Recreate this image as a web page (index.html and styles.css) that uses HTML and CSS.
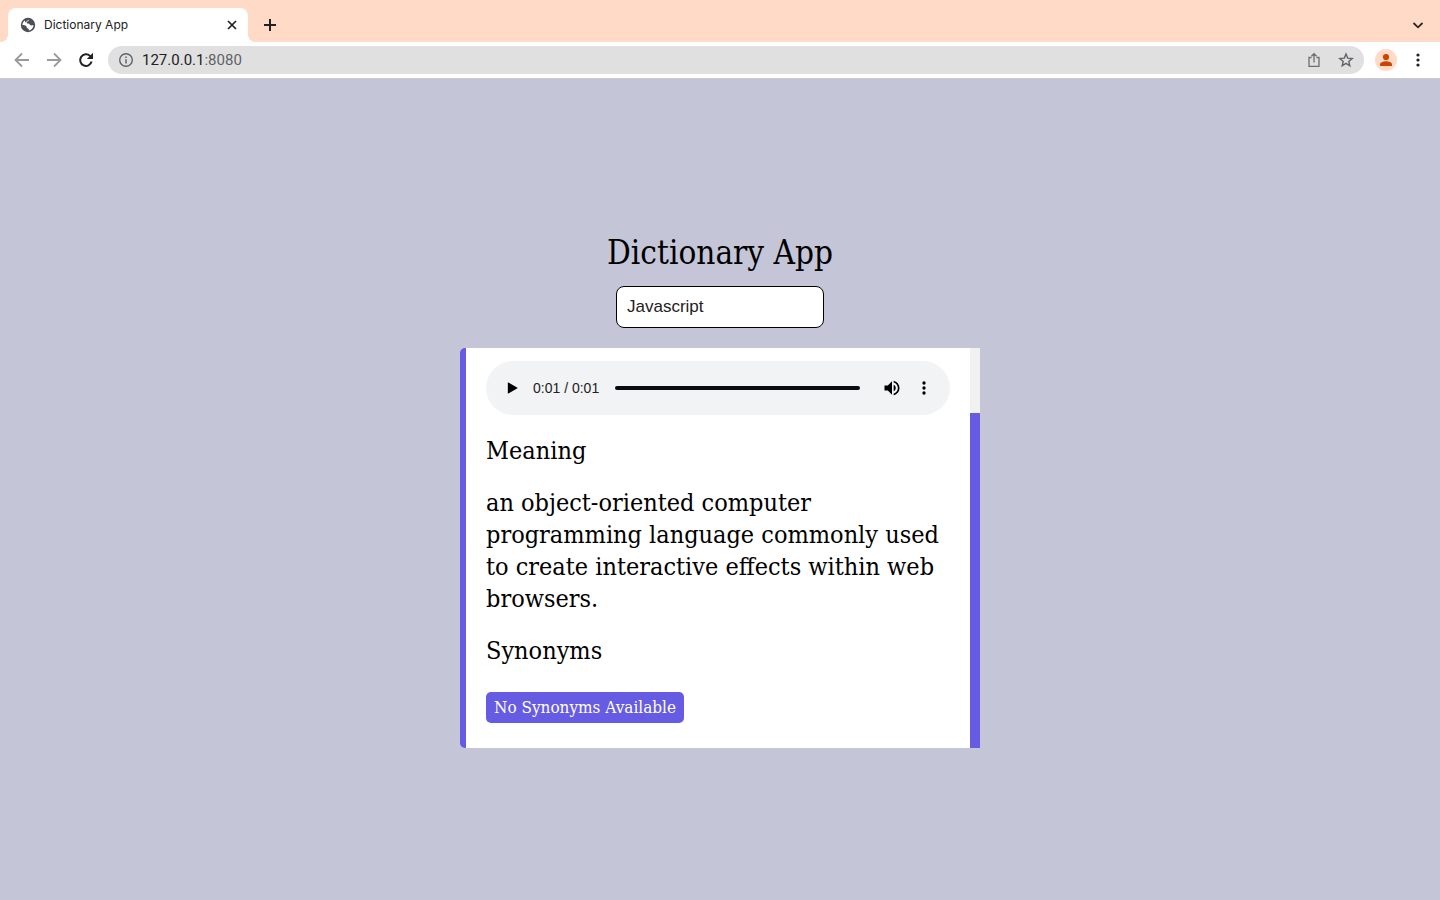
FILE: index.html
```html
<!DOCTYPE html>
<html lang="en">
<head>
<meta charset="utf-8">
<meta name="viewport" content="width=device-width, initial-scale=1">
<title>Dictionary App</title>
<link rel="stylesheet" href="styles.css">
</head>
<body>
<header class="browser">
  <div class="tab-strip">
    <div class="tab">
      <svg class="favicon" viewBox="0 0 16 16" width="16" height="16" aria-hidden="true">
        <circle cx="8" cy="8" r="7.200" fill="#4b4f57"/>
        <path d="M8.800 2.600C9.300 3.900 7.900 4.300 7 4.900C6.200 5.600 6.700 6.500 8 6.500C9.800 6.500 9.600 7.900 10.400 8.300C11.300 8.700 12.400 8.200 13.600 8.300C13.300 11 11.300 13.200 8.600 13.600C9.200 12.500 8.900 11.600 7.800 11.400C6.400 11.100 7 9.800 6.100 8.900C5.200 8.100 3.600 8.300 2.400 7.900C2.500 6.200 3.400 4.600 4.800 3.600C5.200 4.500 5.100 5.400 6 5.500C6.300 4 7.400 4.300 8.800 2.600Z" fill="#fff"/>
      </svg>
      <span class="tab-title">Dictionary App</span>
      <button class="icon-button" aria-label="Close tab"><svg viewBox="0 0 16 16" width="16" height="16"><path d="M4 4l8 8M12 4l-8 8" stroke="#202124" stroke-width="1.700"/></svg></button>
    </div>
    <button class="icon-button new-tab" aria-label="New tab"><svg viewBox="0 0 16 16" width="16" height="16"><path d="M8 2v12M2 8h12" stroke="#202124" stroke-width="2"/></svg></button>
    <button class="icon-button tab-search" aria-label="Search tabs"><svg viewBox="0 0 16 16" width="16" height="16"><path d="M3.500 6L8 10.300L12.500 6" fill="none" stroke="#2d2523" stroke-width="1.800"/></svg></button>
  </div>
  <nav class="toolbar" aria-label="Browser">
    <button class="icon-button" aria-label="Back"><svg viewBox="0 0 16 16" width="16" height="16"><path d="M15 8H2M8 1.500L1.500 8L8 14.500" fill="none" stroke="#9a9a9a" stroke-width="1.800"/></svg></button>
    <button class="icon-button" aria-label="Forward"><svg viewBox="0 0 16 16" width="16" height="16"><path d="M1 8H14M8 1.500L14.500 8L8 14.500" fill="none" stroke="#9a9a9a" stroke-width="1.800"/></svg></button>
    <button class="icon-button" aria-label="Reload"><svg viewBox="0 0 16 16" width="16" height="16"><path d="M13.600 9.500A5.800 5.800 0 1 1 12 3.900L13.200 5.200" fill="none" stroke="#202124" stroke-width="2"/><path d="M15 .8V7H8.800Z" fill="#202124"/></svg></button>
    <div class="address">
      <svg viewBox="0 0 16 16" width="16" height="16" aria-hidden="true"><circle cx="8" cy="8" r="6.300" fill="none" stroke="#5f6368" stroke-width="1.400"/><path d="M8 7.200v4.300M8 4.500v1.600" stroke="#5f6368" stroke-width="1.500"/></svg>
      <span class="url">127.0.0.1<span class="port">:8080</span></span>
      <button class="icon-button share" aria-label="Share"><svg viewBox="0 0 16 16" width="16" height="16"><path d="M5.500 5.500H3V14.300H13V5.500H10.500M8 10.500V2M5.400 4.300L8 1.700L10.600 4.300" fill="none" stroke="#6b6e73" stroke-width="1.300"/></svg></button>
      <button class="icon-button" aria-label="Bookmark"><svg viewBox="0 0 16 16" width="16" height="16"><path d="M8 2L9.700 6.100L14.200 6.500L10.800 9.400L11.800 13.800L8 11.400L4.200 13.800L5.200 9.400L1.800 6.500L6.300 6.100Z" fill="none" stroke="#5f6368" stroke-width="1.400"/></svg></button>
    </div>
    <button class="icon-button avatar" aria-label="Profile"><svg viewBox="0 0 22 22" width="22" height="22"><circle cx="11" cy="8" r="3.100" fill="#cc4300"/><path d="M5 17V15.500C5 13.300 8.500 12.300 11 12.300S17 13.300 17 15.500V17Z" fill="#cc4300"/></svg></button>
    <button class="icon-button" aria-label="Browser menu"><svg viewBox="0 0 16 16" width="16" height="16" fill="#202124"><circle cx="8" cy="3" r="1.600"/><circle cx="8" cy="8" r="1.600"/><circle cx="8" cy="13" r="1.600"/></svg></button>
  </nav>
</header>
<main class="page">
  <section class="dictionary">
    <h1>Dictionary App</h1>
    <input class="search" type="text" value="Javascript" aria-label="Search for a word">
    <article class="card">
      <div class="definition">
        <div class="player" role="group" aria-label="Pronunciation">
          <button class="icon-button" aria-label="Play"><svg viewBox="0 0 24 24" width="20" height="20"><path d="M7 5v14l12-7z" fill="#000"/></svg></button>
          <span class="time">0:01 / 0:01</span>
          <input class="seek" type="range" min="0" max="1" value="1" aria-label="Position">
          <button class="icon-button" aria-label="Mute"><svg viewBox="0 0 24 24" width="20" height="20"><path d="M3 9v6h4l5 5V4L7 9H3zm13.500 3c0-1.770-1.020-3.290-2.500-4.030v8.050c1.480-.73 2.500-2.250 2.500-4.020zM14 3.230v2.060c2.890.86 5 3.540 5 6.710s-2.110 5.850-5 6.710v2.060c4.010-.91 7-4.490 7-8.770s-2.990-7.860-7-8.770z" fill="#000"/></svg></button>
          <button class="icon-button" aria-label="More options"><svg viewBox="0 0 24 24" width="20" height="20"><circle cx="12" cy="6" r="2"/><circle cx="12" cy="12" r="2"/><circle cx="12" cy="18" r="2"/></svg></button>
        </div>
        <h2>Meaning</h2>
        <p>an object-oriented computer programming language commonly used to create interactive effects within web browsers.</p>
        <h2>Synonyms</h2>
        <span class="tag">No Synonyms Available</span>
      </div>
      <div class="scrollbar" aria-hidden="true"><div class="thumb"></div></div>
    </article>
  </section>
</main>
</body>
</html>
```

FILE: styles.css
```css
* { box-sizing: border-box; }

body {
  margin: 0;
  min-height: 100vh;
  display: flex;
  flex-direction: column;
  background: #c5c5d8;
  color: #000;
  font-family: "Roboto Slab", "DejaVu Serif Condensed", "DejaVu Serif", serif;
}

svg { display: block; }

.icon-button {
  flex: none;
  display: grid;
  place-items: center;
  padding: 0;
  border: 0;
  background: none;
}

.browser {
  font-family: Inter, sans-serif;
  background: #fff;
  border-bottom: 1px solid #c9c9cc;
}

.tab-strip {
  display: flex;
  align-items: center;
  padding: 8px 14px 0 8px;
  background: #ffdac7;
}

.tab {
  position: relative;
  display: flex;
  align-items: center;
  gap: 8px;
  width: 240px;
  height: 34px;
  padding: 0 8px 0 12px;
  background: #fff;
  border-radius: 8px 8px 0 0;
}

.tab::before,
.tab::after {
  content: "";
  position: absolute;
  bottom: 0;
  width: 8px;
  height: 8px;
}

.tab::before {
  right: 100%;
  background: radial-gradient(circle at 0 0, #ffdac7 8px, #fff 8px);
}

.tab::after {
  left: 100%;
  background: radial-gradient(circle at 100% 0, #ffdac7 8px, #fff 8px);
}

.tab-title {
  flex: 1;
  font-size: 12px;
  line-height: 16px;
  padding-bottom: 1px;
  color: #202124;
}

.new-tab { margin-left: 14px; }
.tab-search { margin-left: auto; }

.toolbar {
  display: flex;
  align-items: center;
  gap: 16px;
  height: 36px;
  padding: 0 14px;
}

.address {
  flex: 1;
  display: flex;
  align-items: center;
  gap: 8px;
  height: 28px;
  margin: 0 -5px 0 -2px;
  padding: 0 10px;
  border-radius: 14px;
  background: #e0e0e0;
}

.url {
  flex: 1;
  font-family: Roboto, sans-serif;
  font-size: 15px;
  color: #202124;
}

.port { color: #5f6368; }
.share { margin-right: 8px; }

.avatar {
  margin-right: -3px;
  border-radius: 50%;
  background: #ffdac7;
}

.page {
  flex: 1;
  display: grid;
  place-items: center;
  padding-bottom: 2px;
}

.dictionary {
  display: flex;
  flex-direction: column;
  align-items: center;
  width: 100%;
  max-width: 520px;
}

h1, h2, p {
  margin: 0;
  font-weight: 400;
}

h1 {
  font-size: 33px;
  line-height: 46px;
  margin-bottom: 10px;
}

.search {
  width: 208px;
  height: 42px;
  padding: 0 10px;
  border: 1px solid #000;
  border-radius: 8px;
  background: #fff;
  font: 17px "Liberation Sans", Arial, sans-serif;
  color: #222;
}

.card {
  display: flex;
  width: 100%;
  margin-top: 20px;
  border-left: 6px solid #665be3;
  border-radius: 5px 0 0 5px;
  background: #fff;
}

.definition {
  flex: 1;
  display: flex;
  flex-direction: column;
  align-items: flex-start;
  gap: 20px;
  padding: 13px 20px 25px;
}

.player {
  display: flex;
  align-items: center;
  gap: 12px;
  width: 100%;
  height: 54px;
  padding: 0 16px;
  border-radius: 27px;
  background: #f1f3f4;
  font: 14px "Liberation Sans", Arial, sans-serif;
}

.time {
  flex: none;
  margin: 0 4px 0 -1px;
  color: #222;
}

.seek {
  appearance: none;
  flex: 1;
  min-width: 0;
  height: 4px;
  margin: 0 10px 0 0;
  border-radius: 2px;
  background: #0b0b0f;
}

.seek::-webkit-slider-thumb {
  appearance: none;
  width: 4px;
  height: 4px;
}

h2, p {
  font-size: 25px;
  line-height: 32px;
}

.tag {
  margin-top: 5px;
  padding: 5px 8px;
  border-radius: 5px;
  background: #665be3;
  color: #fff;
  font-size: 17px;
  line-height: 21px;
}

.scrollbar {
  width: 10px;
  padding-top: 65px;
  background: #f1f1f1;
}

.thumb {
  height: 100%;
  background: #665be3;
}
```
